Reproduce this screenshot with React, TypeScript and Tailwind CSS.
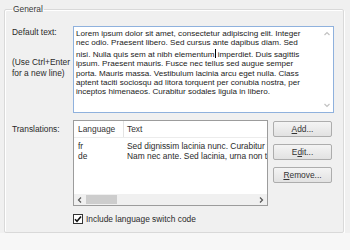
import React from 'react';

const loremLines = [
  'Lorem ipsum dolor sit amet, consectetur adipiscing elit. Integer',
  'nec odio. Praesent libero. Sed cursus ante dapibus diam. Sed',
  'nisi. Nulla quis sem at nibh elementum',
  'ipsum. Praesent mauris. Fusce nec tellus sed augue semper',
  'porta. Mauris massa. Vestibulum lacinia arcu eget nulla. Class',
  'aptent taciti sociosqu ad litora torquent per conubia nostra, per',
  'inceptos himenaeos. Curabitur sodales ligula in libero.',
];

const rows = [
  { lang: 'fr', text: 'Sed dignissim lacinia nunc. Curabitur tortor. Pellentesque nibh.' },
  { lang: 'de', text: 'Nam nec ante. Sed lacinia, urna non tincidunt mattis, tortor neque.' },
];

function Chevron({ dir }: { dir: 'up' | 'down' | 'left' | 'right' }) {
  const d = {
    up: 'M1.5 5 L4 2.5 L6.5 5',
    down: 'M1.5 3 L4 5.5 L6.5 3',
    left: 'M5 1.5 L2.5 4 L5 6.5',
    right: 'M3 1.5 L5.5 4 L3 6.5',
  }[dir];
  return (
    <svg width="8" height="8" viewBox="0 0 8 8">
      <path d={d} fill="none" stroke="currentColor" strokeWidth="1.2" />
    </svg>
  );
}

function Button({ label, mnemonic }: { label: string; mnemonic: number }) {
  return (
    <button className="h-[16px] w-[59px] rounded-[2px] border border-[#adadad] bg-gradient-to-b from-[#f4f4f4] to-[#e2e2e2] text-[8.4px] leading-[14px] text-[#333]">
      {label.slice(0, mnemonic)}
      <span className="underline">{label[mnemonic]}</span>
      {label.slice(mnemonic + 1)}
    </button>
  );
}

export default function App() {
  return (
    <div className="flex h-[250px] w-[350px] flex-col bg-[#f0f0f0] pt-[3px] font-['Liberation_Sans',Arial,sans-serif] text-[8.4px] text-[#2a2a2a]">
      <fieldset className="mx-[4px] h-[230px] w-[340px] rounded-[2px] border border-[#d9d9d9] px-[7px] pb-[6px] shadow-[inset_1px_1px_0_#fff,1px_1px_0_#fff]">
        <legend className="px-[1px] leading-[12px] text-[#3a3a3a]">General</legend>

        <div className="mt-[11px] flex">
          <div className="flex w-[61px] flex-col justify-between pb-[35px] pt-[1px] leading-[10.5px]">
            <span>Default text:</span>
            <span>
              (Use Ctrl+Enter
              <br />
              for a new line)
            </span>
          </div>
          <div className="flex h-[87px] w-[261px] border border-[#8fb1dd] bg-white">
            <div className="flex-1 overflow-hidden pl-[2px] pt-[2px] text-[8.1px] leading-[9.4px] text-[#1a1a1a]">
              {loremLines.map((line, i) => (
                <div key={i} className="whitespace-nowrap">
                  {line}
                  {i === 2 && (
                    <>
                      <span className="inline-block h-[9px] w-[1px] translate-y-[1px] bg-black align-baseline" />
                      {' imperdiet. Duis sagittis'}
                    </>
                  )}
                </div>
              ))}
            </div>
            <div className="flex w-[12px] flex-col items-center justify-between py-[3px] text-[#c2c2c2]">
              <Chevron dir="up" />
              <Chevron dir="down" />
            </div>
          </div>
        </div>

        <div className="mt-[7px] flex">
          <div className="w-[61px] pt-[3px]">Translations:</div>
          <div className="flex h-[86px] w-[195px] flex-col border border-[#9c9c9c] bg-white">
            <div className="flex h-[17px] shrink-0 items-center border-b border-[#ececec] text-[#333]">
              <div className="h-full w-[50px] shrink-0 border-r border-[#e3e3e3] pl-[4px] leading-[17px]">Language</div>
              <div className="pl-[3px]">Text</div>
            </div>
            <div className="flex-1 overflow-hidden pt-[3px] leading-[10px]">
              {rows.map((r) => (
                <div key={r.lang} className="flex whitespace-nowrap">
                  <span className="w-[50px] shrink-0 pl-[4px]">{r.lang}</span>
                  <span className="pl-[3px]">{r.text}</span>
                </div>
              ))}
            </div>
            <div className="flex h-[11px] shrink-0 items-center bg-[#f0f0f0] text-[#555]">
              <div className="flex w-[12px] justify-center"><Chevron dir="left" /></div>
              <div className="h-[9px] w-[31px] bg-[#cdcdcd]" />
              <div className="flex-1" />
              <div className="flex w-[12px] justify-center"><Chevron dir="right" /></div>
            </div>
          </div>
          <div className="ml-[5px] flex flex-col gap-[7px] pt-[1px]">
            <Button label="Add..." mnemonic={0} />
            <Button label="Edit..." mnemonic={1} />
            <Button label="Remove..." mnemonic={0} />
          </div>
        </div>

        <label className="ml-[61px] mt-[7px] flex items-center gap-[3px]">
          <span className="flex h-[10px] w-[10px] items-center justify-center border border-[#333] bg-white">
            <svg width="8" height="8" viewBox="0 0 8 8">
              <path d="M1 4.2 L3 6.2 L7 1.5" fill="none" stroke="#111" strokeWidth="1.6" />
            </svg>
          </span>
          <span>Include language switch code</span>
        </label>
      </fieldset>
      <div className="flex-1 bg-[#f7f7f7]" />
    </div>
  );
}
